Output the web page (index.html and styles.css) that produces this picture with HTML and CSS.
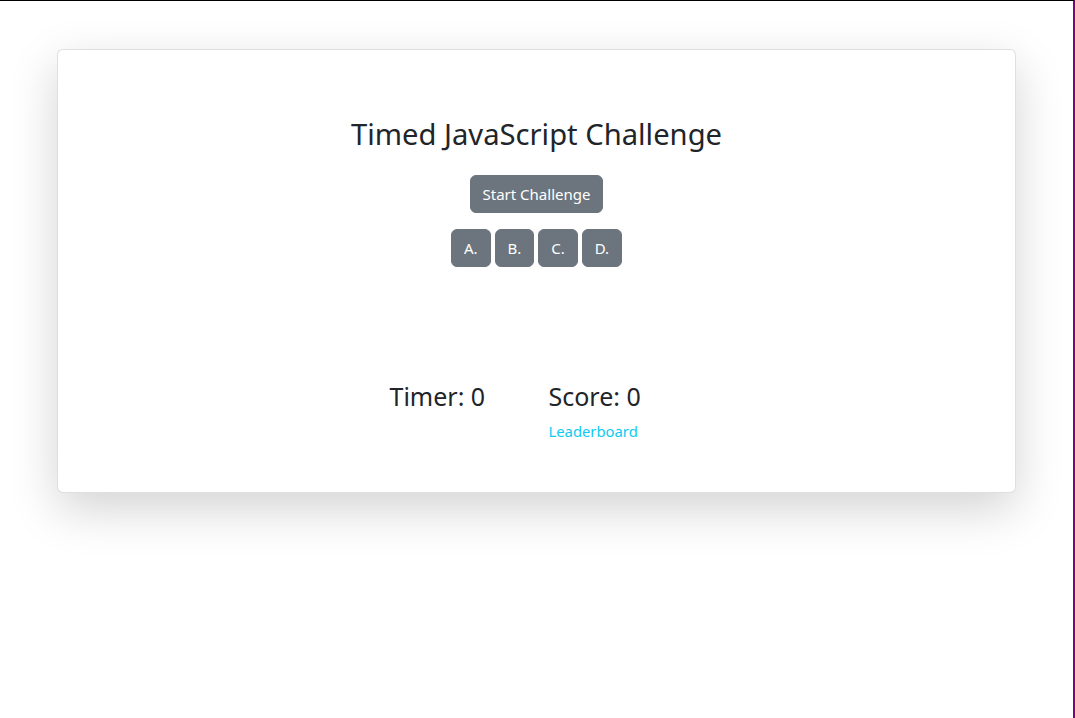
FILE: index.html
```html
<!DOCTYPE html>
<html lang="en">
<head>
<meta charset="utf-8">
<title>Timed JavaScript Challenge</title>
<link rel="stylesheet" href="styles.css">
</head>
<body>
<div class="frame">
  <div class="container">
    <div class="card">
      <h2 class="title">Timed JavaScript Challenge</h2>
      <button class="btn">Start Challenge</button>
      <div class="answers">
        <button class="btn">A.</button>
        <button class="btn">B.</button>
        <button class="btn">C.</button>
        <button class="btn">D.</button>
      </div>
      <div class="stats">
        <div class="stat"><h4 class="stat-label">Timer: 0</h4></div>
        <div class="stat"><h4 class="stat-label">Score: 0</h4><a class="link" href="#">Leaderboard</a></div>
      </div>
    </div>
  </div>
</div>
</body>
</html>
```

FILE: styles.css
```css
* { box-sizing: border-box; }
html, body { margin: 0; padding: 0; }
body {
  font-family: "Noto Sans", "Open Sans", sans-serif;
  font-size: 15px;
  line-height: 1.5;
  color: #212529;
  background: #fff;
}
.frame {
  min-height: 718px;
  width: 1075px;
  border-top: 1px solid #000;
  border-right: 2px solid #800080;
}
.container {
  padding: 48px 57px 0 57px;
}
.card {
  background: #fff;
  border: 1px solid rgba(0,0,0,0.125);
  border-radius: 6px;
  box-shadow: 0 16px 48px rgba(0,0,0,0.175);
  display: flex;
  flex-direction: column;
  align-items: center;
  padding: 66px 0 49px;
}
.title {
  margin: 0;
  font-size: 29.2px;
  font-weight: 400;
  line-height: 36px;
}
.btn {
  font-family: inherit;
  font-size: 15px;
  line-height: 24px;
  padding: 6px 12px;
  border: 1px solid #6c757d;
  border-radius: 6px;
  background: #6c757d;
  color: #fff;
  cursor: pointer;
}
.title + .btn { margin-top: 23px; }
.answers {
  margin-top: 16px;
  display: flex;
  gap: 4px;
}
.stats {
  margin-top: 115px;
  display: flex;
  justify-content: center;
}
.stat {
  width: 159px;
  padding: 0 12px;
  display: flex;
  flex-direction: column;
  align-items: flex-start;
}
.stat-label {
  margin: 0 0 8px;
  font-size: 25px;
  font-weight: 400;
  line-height: 29px;
}
.link {
  color: #0dcaf0;
  text-decoration: none;
  font-size: 14.8px;
  line-height: 24px;
}
```
